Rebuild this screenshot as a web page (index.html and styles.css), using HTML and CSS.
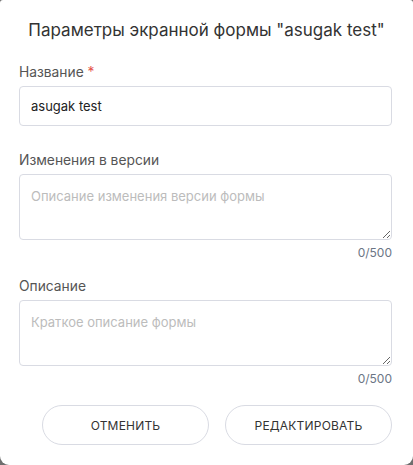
FILE: index.html
```html
<!DOCTYPE html>
<html lang="ru">
  <head>
    <meta charset="UTF-8" />
    <title>Параметры экранной формы</title>
    <link rel="stylesheet" href="styles.css">
  </head>
  <body>
    <div class="modal">
      <h2 class="modal-title">Параметры экранной формы "asugak test"</h2>

      <div class="field">
        <label class="field-label">Название <span class="required">*</span></label>
        <input class="field-input" type="text" value="asugak test" />
      </div>

      <div class="field">
        <label class="field-label">Изменения в версии</label>
        <textarea class="field-area" placeholder="Описание изменения версии формы"></textarea>
        <div class="counter">0/500</div>
      </div>

      <div class="field">
        <label class="field-label">Описание</label>
        <textarea class="field-area" placeholder="Краткое описание формы"></textarea>
        <div class="counter">0/500</div>
      </div>

      <div class="actions">
        <button class="btn">Отменить</button>
        <button class="btn">Редактировать</button>
      </div>
    </div>
  </body>
</html>
```

FILE: styles.css
```css
* {
  margin: 0;
  padding: 0;
  box-sizing: border-box;
}

body {
  font-family: Inter, "Noto Sans", sans-serif;
  background: #6e6e6e;
  width: 413px;
  height: 465px;
  overflow: hidden;
}

.modal {
  background: #fff;
  width: 413px;
  height: 465px;
  border-radius: 3px 3px 9px 9px;
  padding: 19px 21px 0 19px;
  color: #333;
}

.modal-title {
  font-size: 17px;
  font-weight: 400;
  text-align: center;
  color: #333;
  line-height: 22px;
  margin-bottom: 23px;
  margin-right: -2px;
}

.field {
  display: flex;
  flex-direction: column;
  margin-bottom: 26px;
}

.field-label {
  font-size: 13.8px;
  color: #555;
  line-height: 16px;
  margin-bottom: 6px;
}

.required {
  color: #e5534b;
}

.field-input {
  height: 40px;
  border: 1px solid #d9dbe3;
  border-radius: 4px;
  padding: 0 11px;
  font-family: inherit;
  font-size: 13px;
  color: #222;
  outline: none;
}

.field-area {
  height: 66px;
  border: 1px solid #d9dbe3;
  border-radius: 4px;
  padding: 13px 11px;
  font-family: inherit;
  font-size: 13px;
  color: #222;
  resize: vertical;
  outline: none;
}

.field-area::placeholder {
  color: #bcbcbc;
}

.counter {
  text-align: right;
  font-size: 12px;
  color: #6b7585;
  line-height: 14px;
  margin-top: 6px;
  margin-bottom: -8px;
}

.actions {
  display: flex;
  justify-content: flex-end;
  gap: 16px;
  margin-top: 27px;
}

.btn {
  width: 167px;
  height: 40px;
  border: 1px solid #d9dbe3;
  border-radius: 20px;
  background: #fff;
  font-family: inherit;
  font-size: 12px;
  letter-spacing: 0.2px;
  text-transform: uppercase;
  color: #333;
  cursor: pointer;
}
```
